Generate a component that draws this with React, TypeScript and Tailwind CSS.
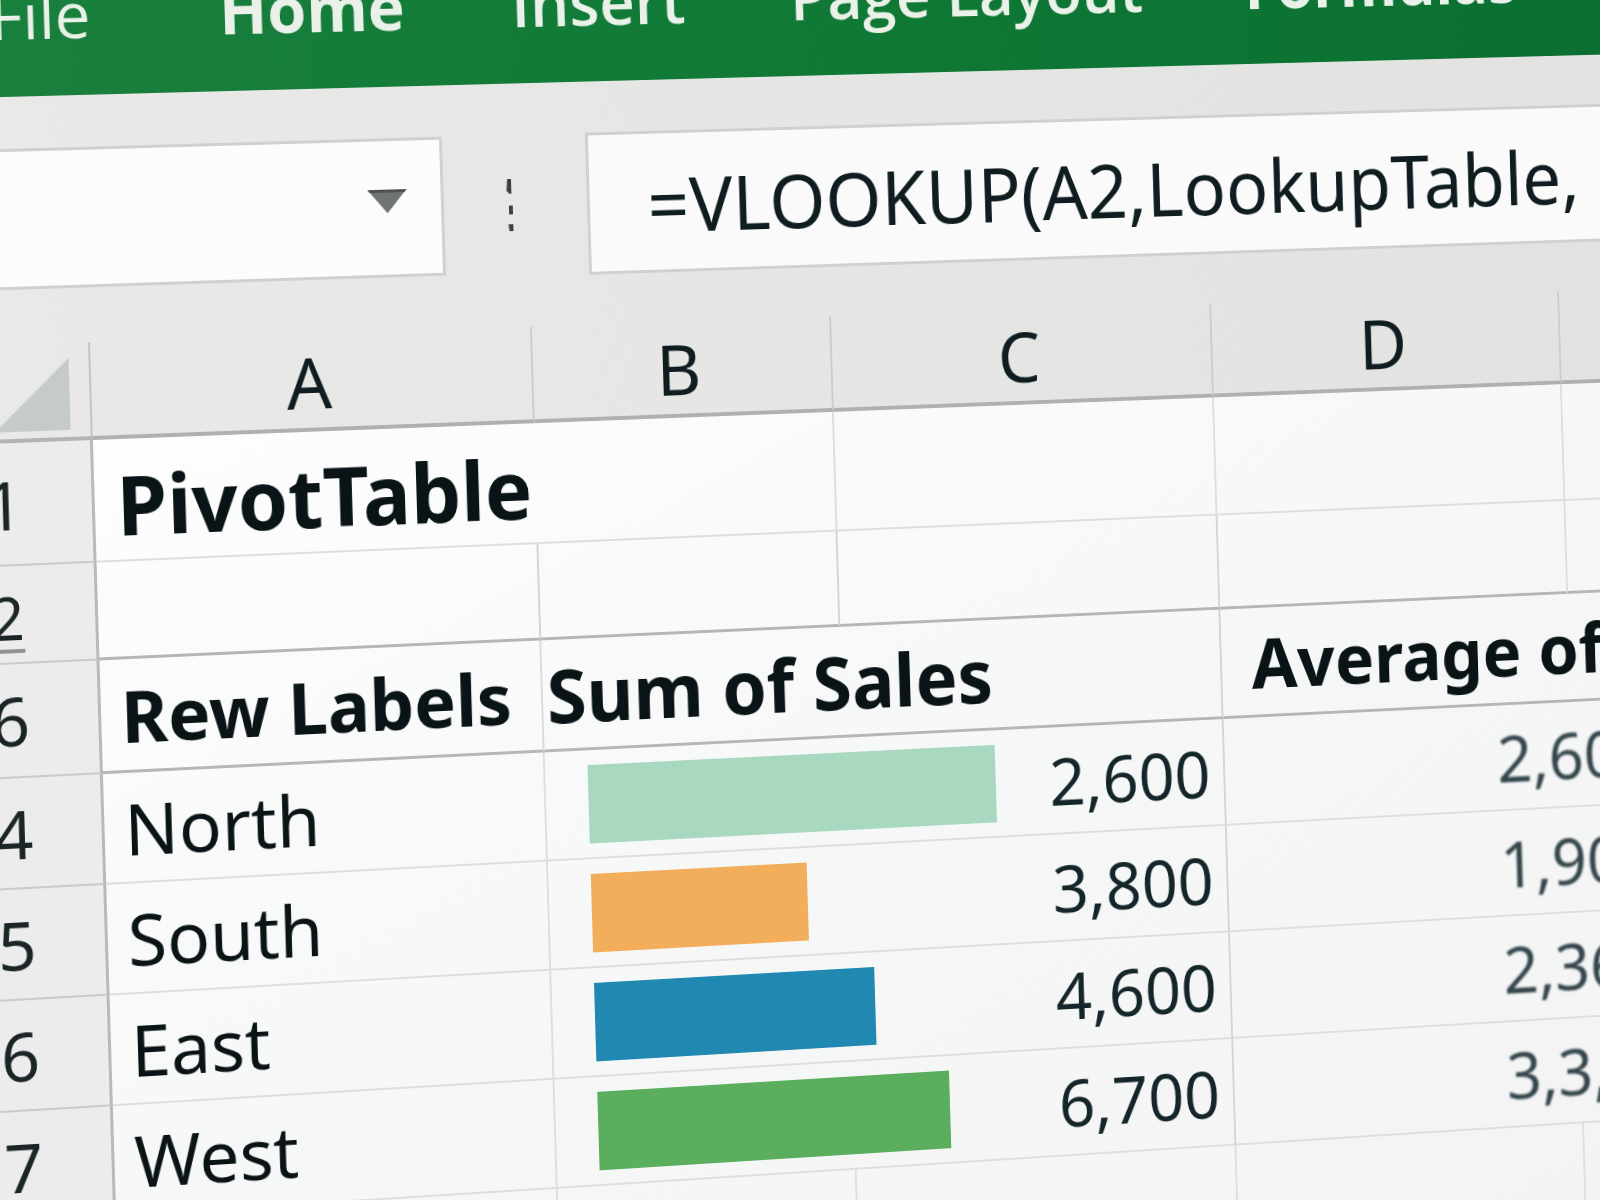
import clsx from 'clsx'

const tabs = [
  { label: 'File', className: 'mr-5 font-normal' },
  { label: 'Home', className: 'font-bold' },
  { label: 'Insert', className: 'font-semibold' },
  { label: 'Page Layout', className: 'font-semibold' },
  { label: 'Formulas', className: 'font-bold' },
]

const columns = ['A', 'B', 'C', 'D', '']

const regions = [
  { row: 4, name: 'North', total: '2,600', average: '2,600', width: 429, color: 'bg-[#a8d8bf]' },
  { row: 5, name: 'South', total: '3,800', average: '1,900', width: 226, color: 'bg-[#f3ae5b]' },
  { row: 6, name: 'East', total: '4,600', average: '2,360', width: 294, color: 'bg-[#2188b2]' },
  { row: 7, name: 'West', total: '6,700', average: '3,3,50', width: 370, color: 'bg-[#5aae5e]' },
]

const rowHeader =
  'border-r-[3px] border-b-2 border-r-[#b7babc] border-b-[#c9cac9] bg-[#ebeceb] py-0 pr-1 pl-0 text-center text-[68px] leading-[80px] font-normal text-[#1b2426]'
const lightCell = 'border-b-2 border-[#dddede] p-0'
const strongCell = 'border-b-[3px] border-[#b5b6b6] p-0'

function Ribbon() {
  return (
    <nav className="flex h-[125px] items-start gap-[110px] bg-linear-to-r from-[#1a803e] via-[#0f7935] to-[#0a6f31] pt-1 pl-[84px] font-['Open_Sans',sans-serif]">
      {tabs.map((tab) => (
        <button
          key={tab.label}
          type="button"
          className={clsx('text-[64px] leading-[80px] whitespace-nowrap text-[#eaf1e9]', tab.className)}
        >
          {tab.label}
        </button>
      ))}
    </nav>
  )
}

function FormulaBar() {
  return (
    <div className="flex h-[248px] items-start pt-[52px]">
      <div className="relative h-[141px] w-[539px] shrink-0">
        <select
          aria-label="Name box"
          className="h-full w-full appearance-none border-[3px] border-[#cfd0cf] bg-[#fbfcfb] text-[64px]"
        >
          <option value=""></option>
        </select>
        <svg className="pointer-events-none absolute top-[52px] right-[38px] h-6 w-10" viewBox="0 0 40 24">
          <path d="M0 0H40L20 24Z" fill="#6f7572" />
          <path d="M0 0H40L38 3H2Z" fill="#4c5250" />
        </svg>
      </div>

      <div className="flex h-[144px] w-[148px] shrink-0 items-center justify-center pr-3">
        <svg className="h-[54px] w-2" viewBox="0 0 8 54" fill="#3a4142">
          <path d="M2 0H6V15H4L1 12ZM3 27H7V36H3ZM2 46H7V53H3Z" />
        </svg>
      </div>

      <input
        aria-label="Formula"
        defaultValue="=VLOOKUP(A2,LookupTable, 2"
        className="h-[145px] min-w-0 flex-1 border-[3px] border-r-0 border-[#cfd0cf] bg-[#f9faf9] pt-1 pl-[60px] text-[76px] text-[#0f1c20] outline-none"
      />
    </div>
  )
}

function Sheet() {
  return (
    <table className="w-full table-fixed border-separate border-spacing-0">
      <colgroup>
        <col className="w-[175px]" />
        <col className="w-[451px]" />
        <col className="w-[313px]" />
        <col className="w-[407px]" />
        <col className="w-[382px]" />
        <col />
      </colgroup>

      <thead className="text-[72px] leading-[80px] text-[#0f1c20]">
        <tr className="h-[98px]">
          <td className="border-r-2 border-b-4 border-r-[#c3c5c4] border-b-[#b3b5b4] p-0">
            <svg className="mt-2 mr-5 ml-auto h-[72px] w-[76px]" viewBox="0 0 76 72">
              <path d="M76 0V72H0Z" fill="#c5cbc8" />
            </svg>
          </td>
          {columns.map((column, i) => (
            <th
              key={i}
              scope="col"
              className="border-r-2 border-b-4 border-r-[#cbcccb] border-b-[#afb0af] py-0 pr-2 pl-0 font-normal"
            >
              {column}
            </th>
          ))}
        </tr>
      </thead>

      <tbody className="bg-linear-to-br from-[#fefefe] via-[#f6f7f7] to-[#f3f3f3] text-[72px] leading-[80px] whitespace-nowrap text-[#0a1417]">
        <tr className="h-[123px]">
          <th scope="row" className={rowHeader}>1</th>
          <td colSpan={2} className={clsx(lightCell, 'border-r-2 pt-2 pl-[22px] text-[82px] font-bold')}>
            PivotTable
          </td>
          <td className={clsx(lightCell, 'border-r-2')} />
          <td className={clsx(lightCell, 'border-r-2')} />
          <td className={lightCell} />
        </tr>

        <tr className="h-[98px]">
          <th scope="row" className={rowHeader}>
            <span className="inline-block border-b-4 border-[#8f9493] text-[60px] leading-[64px]">2</span>
          </th>
          <td className={clsx(strongCell, 'border-r-2 border-r-[#d3d4d4]')} />
          <td className={clsx(strongCell, 'border-r-2 border-r-[#d3d4d4]')} />
          <td className={clsx(strongCell, 'border-r-2 border-r-[#d3d4d4]')} />
          <td className={clsx(strongCell, 'border-r-2 border-r-[#dddede]')} />
          <td className={strongCell} />
        </tr>

        <tr className="h-[114px] font-bold">
          <th scope="row" className={rowHeader}>6</th>
          <td className={clsx(strongCell, 'border-r-2 border-r-[#d9dada] pl-5')}>Rew Labels</td>
          <td colSpan={2} className={clsx(strongCell, 'border-r-2 border-r-[#d3d4d4] pl-1 text-[75px]')}>
            Sum of Sales
          </td>
          <td colSpan={2} className={clsx(strongCell, 'pl-8')}>
            Average of Sales
          </td>
        </tr>

        {regions.map((region) => (
          <tr key={region.row} className="h-[111px]">
            <th scope="row" className={rowHeader}>{region.row}</th>
            <td className={clsx(lightCell, 'border-r-2 pl-5')}>{region.name}</td>
            <td colSpan={2} className={clsx(lightCell, 'border-r-2 border-r-[#d3d4d4]')}>
              <div className="flex items-center justify-between pr-[14px] pl-11 text-[68px] text-[#15262b]">
                <div className={clsx('h-20', region.color)} style={{ width: region.width }} />
                {region.total}
              </div>
            </td>
            <td colSpan={2} className={clsx(lightCell, 'pl-[298px] text-[68px] text-[#33454b]')}>
              <span className="blur-[1px]">{region.average}</span>
            </td>
          </tr>
        ))}

        <tr className="h-[111px]">
          <th scope="row" className={rowHeader}>8</th>
          <td className={clsx(lightCell, 'border-r-2')} />
          <td className={clsx(lightCell, 'border-r-2')} />
          <td className={clsx(lightCell, 'border-r-2')} />
          <td className={clsx(lightCell, 'border-r-2')} />
          <td className={lightCell} />
        </tr>
      </tbody>
    </table>
  )
}

export default function App() {
  return (
    <main className="h-screen overflow-hidden bg-[#f4f4f4] font-['Noto_Sans',sans-serif]">
      {/* the whole window is seen at a slight angle */}
      <div className="origin-top-left [transform:matrix3d(1,-0.0224,0,0.0000331,0.03,1,0,0,0,0,1,0,0,0,0,1)]">
        <div className="-mt-7 -ml-24 w-[115%] bg-linear-to-r from-[#e9eae8] to-[#e2e2e1]">
          <Ribbon />
          <FormulaBar />
          <Sheet />
        </div>
      </div>
    </main>
  )
}
